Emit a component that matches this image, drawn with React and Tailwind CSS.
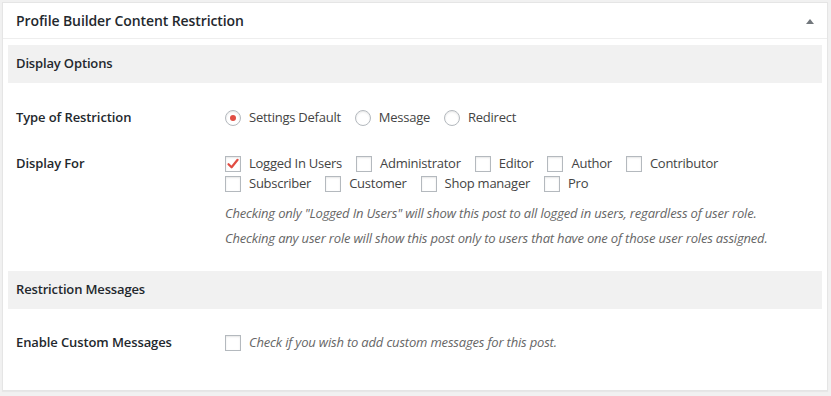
const labelCls = "w-[209px] shrink-0 text-[13px] font-semibold tracking-[-0.1px] text-[#23282d]"

function Radio({ checked, label }) {
  return (
    <label className="flex items-center mr-[14px]">
      <span className="w-4 h-4 rounded-full border border-[#b4b9be] bg-white shadow-[inset_0_1px_2px_rgba(0,0,0,0.1)] flex items-center justify-center mr-2">
        {checked && <span className="w-[6px] h-[6px] rounded-full bg-[#e14d43]" />}
      </span>
      <span>{label}</span>
    </label>
  )
}

function Check({ checked, label }) {
  return (
    <label className="flex items-center mr-[14px]">
      <span className="w-4 h-4 border border-[#b4b9be] bg-white shadow-[inset_0_1px_2px_rgba(0,0,0,0.1)] flex items-center justify-center mr-2">
        {checked && (
          <svg width="14" height="14" viewBox="0 0 14 14">
            <path d="M2.5 7.2 L5.6 10.3 L11.6 2.8" fill="none" stroke="#e14d43" strokeWidth="2.2" strokeLinecap="round" strokeLinejoin="round" />
          </svg>
        )}
      </span>
      <span>{label}</span>
    </label>
  )
}

function SectionHead({ children }) {
  return (
    <div className="h-[38px] bg-[#f1f1f1] px-2 flex items-center text-[13px] font-semibold tracking-[-0.15px] text-[#23282d]">
      {children}
    </div>
  )
}

export default function App() {
  return (
    <div className="w-[831px] h-[396px] bg-[#f1f1f1] pt-[2px] px-[2px] font-['Open_Sans',sans-serif] text-[13px] tracking-[-0.25px] text-[#444]">
      <div className="w-[826px] h-[389px] bg-white border border-[#e5e5e5] shadow-[0_1px_1px_rgba(0,0,0,0.04)]">
        {/* header */}
        <div className="h-[36px] border-b border-[#eee] flex items-center justify-between pl-[13px] pr-[13px]">
          <h2 className="text-[14px] font-semibold tracking-[-0.1px] text-[#23282d]">Profile Builder Content Restriction</h2>
          <svg width="8" height="5" viewBox="0 0 8 5" className="mt-[2px]">
            <path d="M0 5 L4 0 L8 5 Z" fill="#72777c" />
          </svg>
        </div>

        <div className="px-[5px] pt-[6px]">
          <SectionHead>Display Options</SectionHead>

          <div className="px-2">
            <div className="flex items-center h-5 mt-[25px]">
              <div className={labelCls}>Type of Restriction</div>
              <div className="flex items-center">
                <Radio checked label="Settings Default" />
                <Radio label="Message" />
                <Radio label="Redirect" />
              </div>
            </div>

            <div className="flex mt-[26px]">
              <div className={labelCls + " leading-5 -mt-[1px]"}>Display For</div>
              <div>
                <div className="flex items-center h-5">
                  <Check checked label="Logged In Users" />
                  <Check label="Administrator" />
                  <Check label="Editor" />
                  <Check label="Author" />
                  <Check label="Contributor" />
                </div>
                <div className="flex items-center h-5">
                  <Check label="Subscriber" />
                  <Check label="Customer" />
                  <Check label="Shop manager" />
                  <Check label="Pro" />
                </div>
                <p className="italic text-[#666] tracking-[-0.18px] leading-5 mt-[9px]">
                  Checking only "Logged In Users" will show this post to all logged in users, regardless of user role.
                </p>
                <p className="italic text-[#666] tracking-[-0.18px] leading-5 mt-[5px]">
                  Checking any user role will show this post only to users that have one of those user roles assigned.
                </p>
              </div>
            </div>
          </div>

          <div className="mt-[23px]">
            <SectionHead>Restriction Messages</SectionHead>
          </div>

          <div className="px-2">
            <div className="flex items-center h-5 mt-[24px]">
              <div className={labelCls}>Enable Custom Messages</div>
              <label className="flex items-center">
                <span className="w-4 h-4 border border-[#b4b9be] bg-white shadow-[inset_0_1px_2px_rgba(0,0,0,0.1)] mr-2" />
                <span className="italic text-[#666] tracking-[-0.18px]">Check if you wish to add custom messages for this post.</span>
              </label>
            </div>
          </div>
        </div>
      </div>
    </div>
  )
}
